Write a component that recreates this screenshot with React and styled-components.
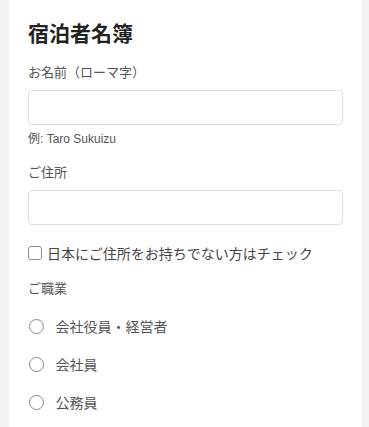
import React from "react";
import styled, { createGlobalStyle } from "styled-components";

const Global = createGlobalStyle`
  html, body { margin: 0; padding: 0; background: #f3f3f6; }
  body { font-family: "Noto Sans CJK JP", "Noto Sans", sans-serif; }
  * { box-sizing: border-box; }
`;

const Page = styled.div`
  width: 369px;
  height: 427px;
  overflow: hidden;
  padding: 0 7px 0 9px;
`;

const Card = styled.div`
  background: #ffffff;
  height: 100%;
  padding: 17px 19px 0 19px;
  display: flex;
  flex-direction: column;
`;

const Title = styled.h1`
  margin: 0;
  font-size: 21px;
  line-height: 30px;
  font-weight: 700;
  color: #222;
`;

const Label = styled.div`
  font-size: 13px;
  line-height: 20px;
  color: #555;
  margin-top: ${(p) => p.$mt}px;
`;

const Input = styled.input`
  display: block;
  width: 315px;
  height: 35px;
  margin-top: 8px;
  border: 1px solid #dedee2;
  border-radius: 4px;
  background: #fff;
  outline: none;
  font: inherit;
  padding: 0 10px;
`;

const Hint = styled.div`
  font-size: 12px;
  line-height: 16px;
  color: #555;
  margin-top: 6px;
  font-family: "Liberation Sans", "Noto Sans CJK JP", sans-serif;
`;

const CheckRow = styled.label`
  display: flex;
  align-items: center;
  gap: 5px;
  height: 22px;
  margin-top: 17px;
  font-size: 14px;
  color: #444;
`;

const Box = styled.span`
  width: 14px;
  height: 14px;
  border: 1.5px solid #8a8a8a;
  border-radius: 3px;
  flex: none;
`;

const RadioList = styled.div`
  display: flex;
  flex-direction: column;
  margin-top: 9px;
`;

const RadioRow = styled.label`
  display: flex;
  align-items: center;
  gap: 12px;
  height: 38px;
  font-size: 14px;
  color: #555;
`;

const Circle = styled.span`
  width: 15px;
  height: 15px;
  border: 1.6px solid #8a8a8a;
  border-radius: 50%;
  flex: none;
  margin-left: 0.5px;
`;

const jobs = ["会社役員・経営者", "会社員", "公務員"];

export default function App() {
  return (
    <>
      <Global />
      <Page>
        <Card>
          <Title>宿泊者名簿</Title>
          <Label $mt={15}>お名前（ローマ字）</Label>
          <Input type="text" />
          <Hint>例: Taro Sukuizu</Hint>
          <Label $mt={15}>ご住所</Label>
          <Input type="text" />
          <CheckRow>
            <Box />
            日本にご住所をお持ちでない方はチェック
          </CheckRow>
          <Label $mt={14}>ご職業</Label>
          <RadioList>
            {jobs.map((j) => (
              <RadioRow key={j}>
                <Circle />
                {j}
              </RadioRow>
            ))}
          </RadioList>
        </Card>
      </Page>
    </>
  );
}
